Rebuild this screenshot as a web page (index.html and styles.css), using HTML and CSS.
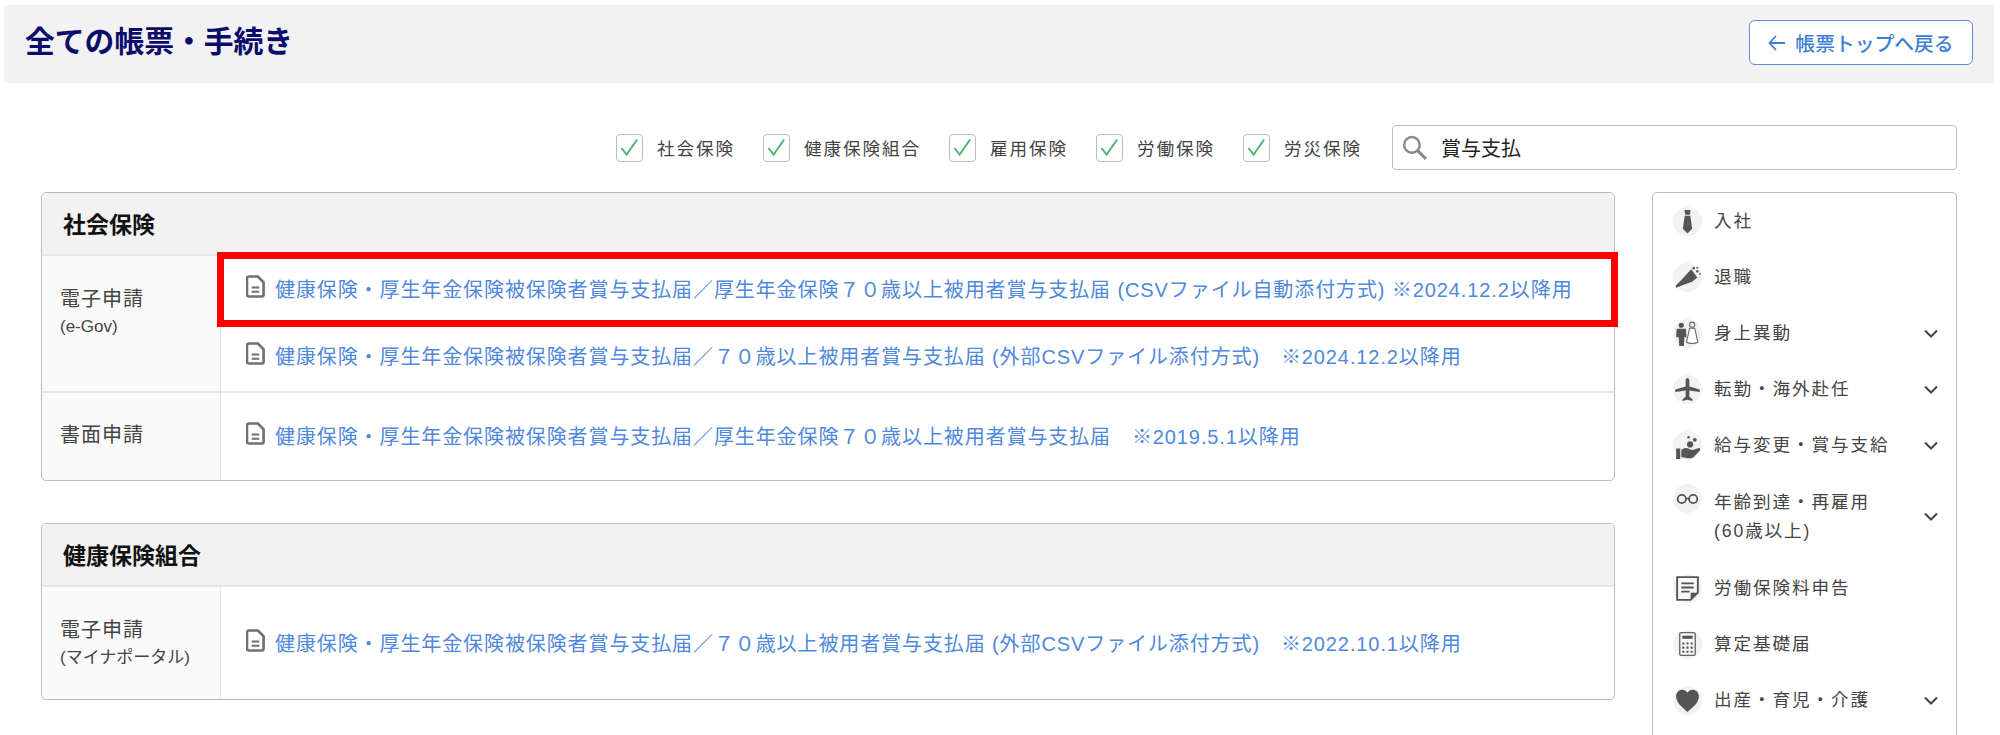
FILE: index.html
```html
<!DOCTYPE html>
<html lang="ja">
<head>
<meta charset="utf-8">
<title>全ての帳票・手続き</title>
<link rel="stylesheet" href="styles.css">
</head>
<body>
<svg class="defs" width="0" height="0" aria-hidden="true">
  <symbol id="doc" viewBox="0 0 20 24"><path d="M3 1.500h9.500l6 6v13a2 2 0 0 1-2 2H3a2 2 0 0 1-2-2v-17a2 2 0 0 1 2-2z" fill="none" stroke="#707070" stroke-width="2.800"/><path d="M6 13h8M6 17.500h8" stroke="#707070" stroke-width="2.200"/></symbol>
  <symbol id="chev" viewBox="0 0 14 9"><path d="M1 1.500l6 6 6-6" fill="none" stroke="#444" stroke-width="2"/></symbol>
  <symbol id="check" viewBox="0 0 20 20"><path d="M1.500 10.500l5.500 7L18 1.500" fill="none" stroke="#4fb56f" stroke-width="2"/></symbol>
</svg>

<header class="page-head">
  <h1 class="page-title">全ての帳票・手続き</h1>
  <a class="back-btn" href="#">
    <svg class="back-arrow" viewBox="0 0 18 16"><path d="M8 1L1.500 8 8 15M2 8h15" fill="none" stroke="#3f7fd6" stroke-width="1.800"/></svg>
    <span>帳票トップへ戻る</span>
  </a>
</header>

<div class="filters">
  <label class="filter"><span class="box"><svg class="tick"><use href="#check"/></svg></span>社会保険</label>
  <label class="filter"><span class="box"><svg class="tick"><use href="#check"/></svg></span>健康保険組合</label>
  <label class="filter"><span class="box"><svg class="tick"><use href="#check"/></svg></span>雇用保険</label>
  <label class="filter"><span class="box"><svg class="tick"><use href="#check"/></svg></span>労働保険</label>
  <label class="filter"><span class="box"><svg class="tick"><use href="#check"/></svg></span>労災保険</label>
  <div class="search">
    <svg class="search-icon" viewBox="0 0 24 24"><circle cx="9.500" cy="9.500" r="7.500" fill="none" stroke="#8a8a8a" stroke-width="2.400"/><path d="M15 15l8 8" stroke="#8a8a8a" stroke-width="3"/></svg>
    <span class="search-text">賞与支払</span>
  </div>
</div>

<main class="content">
  <div class="panels">
    <section class="panel">
      <h2 class="panel-title">社会保険</h2>
      <div class="row row-gov">
        <div class="row-label">電子申請<small>(e-Gov)</small></div>
        <div class="row-links">
          <div class="link-item first">
            <svg class="doc"><use href="#doc"/></svg>
            <a href="#">健康保険・厚生年金保険被保険者賞与支払届／厚生年金保険７０歳以上被用者賞与支払届 (CSVファイル自動添付方式) ※2024.12.2以降用</a>
            <span class="highlight"></span>
          </div>
          <div class="link-item">
            <svg class="doc"><use href="#doc"/></svg>
            <a href="#">健康保険・厚生年金保険被保険者賞与支払届／７０歳以上被用者賞与支払届 (外部CSVファイル添付方式)　※2024.12.2以降用</a>
          </div>
        </div>
      </div>
      <div class="row row-paper">
        <div class="row-label">書面申請</div>
        <div class="row-links">
          <div class="link-item">
            <svg class="doc"><use href="#doc"/></svg>
            <a href="#">健康保険・厚生年金保険被保険者賞与支払届／厚生年金保険７０歳以上被用者賞与支払届　※2019.5.1以降用</a>
          </div>
        </div>
      </div>
    </section>

    <section class="panel">
      <h2 class="panel-title">健康保険組合</h2>
      <div class="row row-mynaportal">
        <div class="row-label">電子申請<small>(マイナポータル)</small></div>
        <div class="row-links">
          <div class="link-item">
            <svg class="doc"><use href="#doc"/></svg>
            <a href="#">健康保険・厚生年金保険被保険者賞与支払届／７０歳以上被用者賞与支払届 (外部CSVファイル添付方式)　※2022.10.1以降用</a>
          </div>
        </div>
      </div>
    </section>
  </div>

  <nav class="side">
    <a class="side-item" href="#">
      <svg class="side-icon" viewBox="0 0 28 28"><circle cx="14" cy="14" r="14" fill="#f2f2f2"/><path d="M11 3h6l-.8 4.500h-4.400zM11.300 8.500h5.400l1.800 12.500-4.500 4.500-4.500-4.500z" fill="#555"/></svg>
      <span class="side-text">入社</span>
    </a>
    <a class="side-item" href="#">
      <svg class="side-icon" viewBox="0 0 28 28"><circle cx="14" cy="14" r="14" fill="#f2f2f2"/><path d="M3 24l-.5-2 6-6 9-10 6 8-5 4-8 3z" fill="#555"/><circle cx="20" cy="5" r="1.300" fill="#666"/><circle cx="23.500" cy="4.500" r="1.100" fill="#777"/><circle cx="23.500" cy="8" r="1.300" fill="#666"/><circle cx="26" cy="10.500" r="1" fill="#777"/></svg>
      <span class="side-text">退職</span>
    </a>
    <a class="side-item" href="#">
      <svg class="side-icon" viewBox="0 0 28 28"><circle cx="14" cy="14" r="14" fill="#f2f2f2"/><circle cx="8" cy="6" r="2.500" fill="#555"/><path d="M3.500 9.500h9l.5 8h-2l-.5 8.500H6l-.5-8.500H3z" fill="#555"/><circle cx="18.500" cy="5.500" r="2.500" fill="none" stroke="#666"/><path d="M16 9h5l3 13.500c-3 1.500-8 1.500-11 0z" fill="#fff" stroke="#666"/></svg>
      <span class="side-text">身上異動</span>
      <svg class="chev"><use href="#chev"/></svg>
    </a>
    <a class="side-item" href="#">
      <svg class="side-icon" viewBox="0 0 28 28"><circle cx="14" cy="14" r="14" fill="#f2f2f2"/><path d="M14 3c1.200 0 1.800 1.500 1.800 3v5l10 3v2.500l-10-1.500v6l3 2.500v1.500l-4.800-1-4.800 1v-1.500l3-2.500v-6l-10 1.500V14l10-3V6c0-1.500.6-3 1.800-3z" fill="#555"/></svg>
      <span class="side-text">転勤・海外赴任</span>
      <svg class="chev"><use href="#chev"/></svg>
    </a>
    <a class="side-item" href="#">
      <svg class="side-icon" viewBox="0 0 28 28"><circle cx="14" cy="14" r="14" fill="#f2f2f2"/><path d="M3 17h4v10H3zM8 18c3-2 6-2 9 0h3l5-1.500c1.500 0 1.500 2 .5 2.800L20 25c-2 1.500-4 1.500-6 1.200L8 25z" fill="#555"/><circle cx="16.500" cy="13" r="3" fill="#555"/><circle cx="21" cy="8.500" r="1.800" fill="#555"/><circle cx="15" cy="6" r="1.200" fill="#555"/></svg>
      <span class="side-text">給与変更・賞与支給</span>
      <svg class="chev"><use href="#chev"/></svg>
    </a>
    <a class="side-item double" href="#">
      <svg class="side-icon" viewBox="0 0 28 28"><circle cx="14" cy="14" r="14" fill="#f2f2f2"/><circle cx="8.500" cy="14.500" r="4" fill="none" stroke="#555" stroke-width="1.800"/><circle cx="19.500" cy="14.500" r="4" fill="none" stroke="#555" stroke-width="1.800"/><path d="M12.500 14h3" stroke="#555" stroke-width="1.500"/></svg>
      <span class="side-text">年齢到達・再雇用<br>(60歳以上)</span>
      <svg class="chev"><use href="#chev"/></svg>
    </a>
    <a class="side-item" href="#">
      <svg class="side-icon" viewBox="0 0 28 28"><circle cx="14" cy="14" r="14" fill="#f2f2f2"/><path d="M4 3h20v15l-7 7H4z" fill="#f7f7f7" stroke="#555" stroke-width="1.800"/><path d="M8 9h12M8 13h12M8 17h8" stroke="#555" stroke-width="1.800"/><path d="M17 25v-7h7z" fill="#555"/></svg>
      <span class="side-text">労働保険料申告</span>
    </a>
    <a class="side-item" href="#">
      <svg class="side-icon" viewBox="0 0 28 28"><circle cx="14" cy="14" r="14" fill="#f2f2f2"/><rect x="6.500" y="2.500" width="15" height="22" rx="1.500" fill="#f7f7f7" stroke="#666" stroke-width="1.300"/><path d="M9 5.500h10v3H9z" fill="#555"/><path d="M9 12h2v2H9zM13 12h2v2h-2zM17 12h2v2h-2zM9 16h2v2H9zM13 16h2v2h-2zM17 16h2v2h-2zM9 20h2v2H9zM13 20h2v2h-2zM17 20h2v2h-2z" fill="#555"/></svg>
      <span class="side-text">算定基礎届</span>
    </a>
    <a class="side-item" href="#">
      <svg class="side-icon" viewBox="0 0 28 28"><circle cx="14" cy="14" r="14" fill="#f2f2f2"/><path d="M14 25C8 20 3 16 3 10c0-4 3-6.500 6-6.500 2 0 4 1 5 3 1-2 3-3 5-3 3 0 6 2.500 6 6.500 0 6-5 10-11 15z" fill="#555"/></svg>
      <span class="side-text">出産・育児・介護</span>
      <svg class="chev"><use href="#chev"/></svg>
    </a>
  </nav>
</main>
</body>
</html>
```
FILE: styles.css
```css
html, body {
  margin: 0;
  height: 100vh;
  overflow: hidden;
  background: #fff;
}
body {
  font-family: "Liberation Sans", "Noto Sans CJK JP", sans-serif;
  color: #444;
}
a { text-decoration: none; }
.defs { display: block; height: 0; }

.page-head {
  margin: 5px 6px 0 4px;
  height: 78px;
  padding: 0 21px 0 21px;
  box-sizing: border-box;
  background: #f2f2f2;
  display: flex;
  align-items: center;
  justify-content: space-between;
}
.page-title {
  margin: 0 0 4px;
  font-size: 29.800px;
  font-weight: 700;
  color: #0b0b6b;
  line-height: 40px;
}
.back-btn {
  width: 224px;
  height: 45px;
  box-sizing: border-box;
  margin-bottom: 3px;
  background: #fff;
  border: 1.500px solid #5b8ed8;
  border-radius: 6px;
  display: flex;
  align-items: center;
  justify-content: center;
  gap: 9px;
  font-size: 19.800px;
  font-weight: 500;
  color: #3f7fd6;
}
.back-arrow { width: 18px; height: 16px; }

.filters {
  margin: 42px 43px 0 0;
  height: 45px;
  display: flex;
  align-items: center;
  justify-content: flex-end;
}
.filter {
  display: flex;
  align-items: center;
  gap: 14px;
  margin-right: 28px;
  font-size: 17.600px;
  letter-spacing: 1.900px;
  color: #444;
}
.box {
  width: 27px;
  height: 28px;
  box-sizing: border-box;
  border: 1px solid #bbb;
  border-radius: 4px;
  display: flex;
  align-items: center;
  justify-content: center;
}
.tick { width: 19px; height: 19px; }
.search {
  width: 565px;
  height: 45px;
  box-sizing: border-box;
  margin-left: 2px;
  border: 1px solid #bbb;
  border-radius: 4px;
  display: flex;
  align-items: center;
  padding-left: 9px;
  gap: 14px;
}
.search-icon { width: 25px; height: 25px; }
.search-text { font-size: 20px; color: #222; }

.content {
  display: flex;
  align-items: flex-start;
  margin: 22px 43px 0 41px;
  gap: 37px;
}
.panels {
  flex: 0 0 1574px;
  display: flex;
  flex-direction: column;
  gap: 42px;
}
.panel {
  border: 1px solid #bbb;
  border-radius: 5px;
}
.panel-title {
  margin: 0;
  height: 63px;
  padding: 0 0 2px 21px;
  box-sizing: border-box;
  display: flex;
  align-items: center;
  background: #f2f2f2;
  border-bottom: 2px solid #e6e6e6;
  border-radius: 5px 5px 0 0;
  font-size: 23px;
  font-weight: 700;
  color: #111;
}
.row { display: flex; }
.row-gov { height: 137px; border-bottom: 2px solid #e6e6e6; box-sizing: border-box; }
.row-paper { height: 87px; }
.row-mynaportal { height: 112px; }
.row-label {
  flex: 0 0 179px;
  box-sizing: border-box;
  background: #fafafa;
  border-right: 1px solid #e6e6e6;
  padding: 29px 0 0 18px;
  font-size: 20px;
  line-height: 28px;
  color: #444;
  letter-spacing: 1px;
  border-radius: 0 0 0 5px;
}
.row-gov .row-label { border-radius: 0; }
.row-paper .row-label { padding-top: 28px; }
.row-label small {
  display: block;
  font-size: 17px;
  line-height: 27px;
  letter-spacing: 0;
}
.row-links { flex: 1; padding: 0 0 0 25px; }
.link-item {
  display: flex;
  align-items: center;
  gap: 10px;
  height: 70px;
  position: relative;
}
.link-item.first { height: 64px; }
.row-paper .link-item { height: 84px; }
.row-mynaportal .link-item { height: 110px; }
.link-item a {
  font-size: 20px;
  color: #4f88dc;
  letter-spacing: 0.900px;
  white-space: nowrap;
}
.doc { width: 19px; height: 23px; flex: none; margin-top: -3px; }
.highlight {
  position: absolute;
  left: -29px;
  top: -4px;
  width: 1401px;
  height: 75px;
  box-sizing: border-box;
  border: 7px solid #f00;
  pointer-events: none;
}

.side {
  flex: 0 0 305px;
  box-sizing: border-box;
  height: 700px;
  border: 1px solid #bbb;
  border-radius: 5px;
  padding: 0 18px 0 20px;
  display: flex;
  flex-direction: column;
}
.side-item {
  display: flex;
  align-items: center;
  gap: 12px;
  height: 56px;
  flex: none;
  font-size: 17.600px;
  letter-spacing: 1.900px;
  color: #444;
}
.side-item.double { height: 87px; }
.side-item.double .side-icon { align-self: flex-start; margin-top: 11px; }
.side-icon { width: 29px; height: 29px; flex: none; }
.side-text { flex: 1; line-height: 29px; }
.chev { width: 14px; height: 9px; flex: none; }
```
